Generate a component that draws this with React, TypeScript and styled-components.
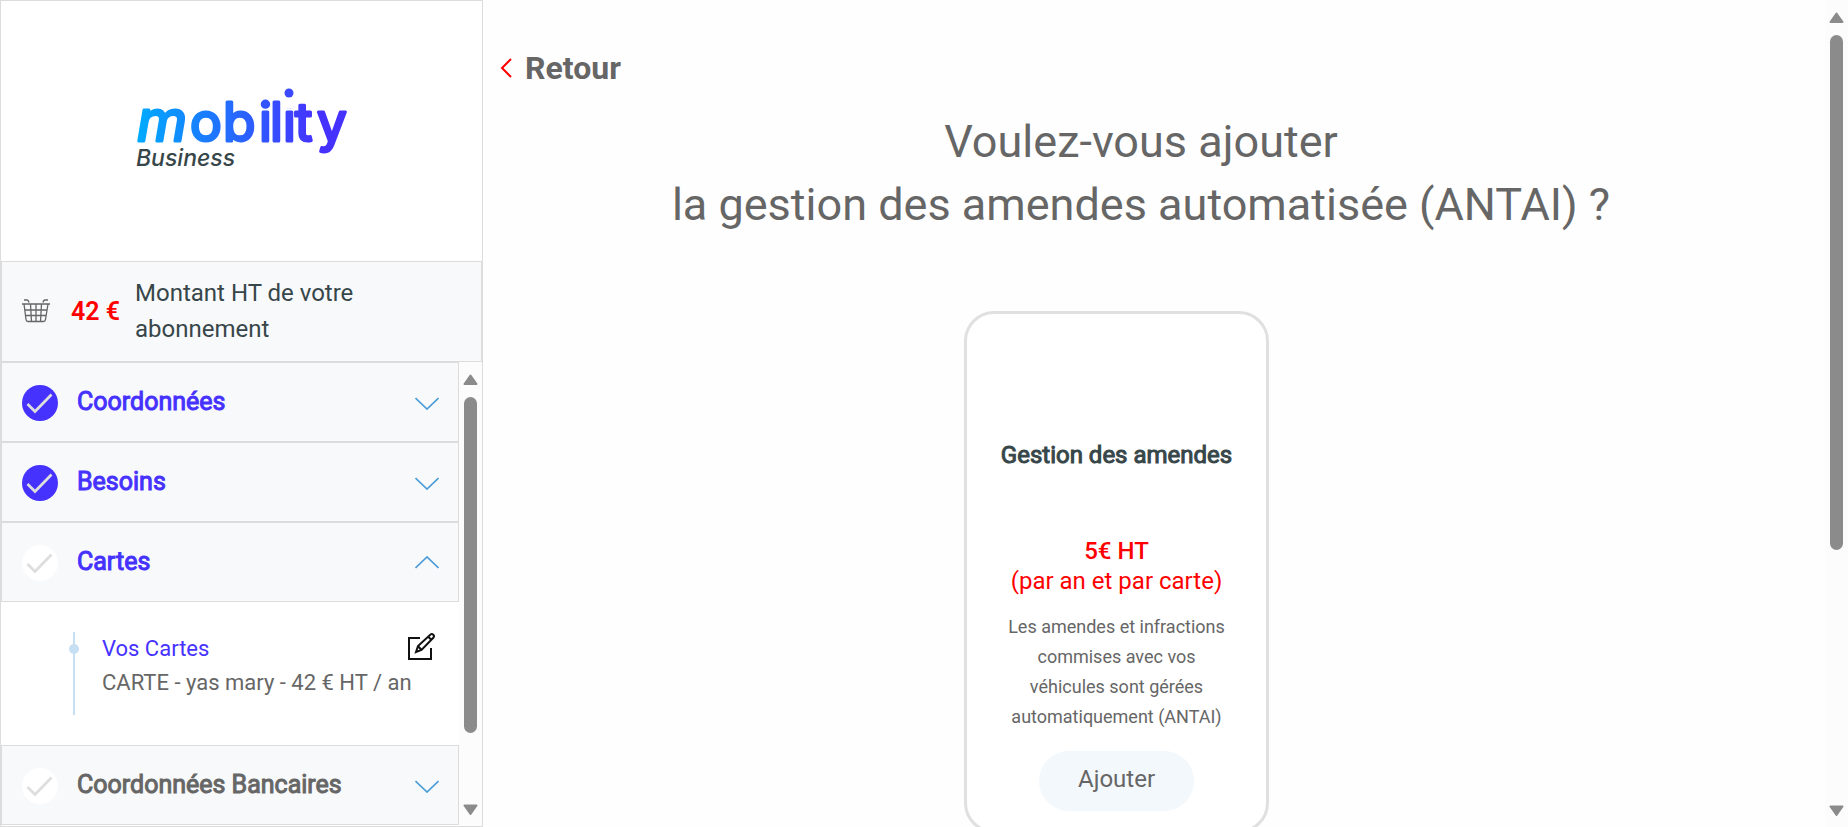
import React from "react";
import styled, { createGlobalStyle } from "styled-components";

const GlobalStyle = createGlobalStyle`
  *, *::before, *::after { box-sizing: border-box; }
  html, body { height: 100%; margin: 0; overflow: hidden; }
  #root { height: 100%; }
  body {
    background: #fefefe;
    color: #666;
    font-family: Roboto, "Liberation Sans", sans-serif;
    font-size: 24px;
  }
  h1, h2, p, ul { margin: 0; padding: 0; }
  button { font: inherit; color: inherit; border: 0; background: none; padding: 0; cursor: pointer; }
`;

const Page = styled.div`
  display: flex;
  height: 100vh;
`;

const Sidebar = styled.aside`
  display: flex;
  flex-direction: column;
  flex: 0 0 483px;
  border: 1px solid #dcdcdc;
  background: #fff;
`;

const Brand = styled.div`
  display: flex;
  align-items: center;
  justify-content: center;
  flex: 0 0 260px;
`;

const Amount = styled.section`
  display: flex;
  align-items: center;
  padding: 13px 19px 14px;
  border: 1px solid #dcdcdc;
  background: #f8f9fb;
`;

const AmountPrice = styled.strong`
  margin: 0 15px 0 20px;
  padding-top: 2px;
  color: #f00;
  font-size: 25px;
  font-weight: 600;
  line-height: 36px;
  white-space: nowrap;
`;

const AmountText = styled.span`
  color: #374649;
  line-height: 36px;
`;

const Steps = styled.div`
  display: flex;
  flex: 1;
  min-height: 0;
`;

const StepList = styled.ul`
  flex: 1;
  min-width: 0;
  overflow: hidden;
  list-style: none;
`;

const StepHeader = styled.button<{ $active?: boolean }>`
  display: flex;
  align-items: center;
  width: 100%;
  height: 80px;
  padding: 2px 19px 0 20px;
  border: 1px solid #dcdcdc;
  background: #f8f9fb;
  color: ${(p) => (p.$active ? "#4632ff" : "#666")};
  text-align: left;
`;

const StepTitle = styled.span`
  flex: 1;
  margin-left: 19px;
  padding-bottom: 3px;
  font-size: 25px;
  -webkit-text-stroke: 1px currentColor;
`;

const StepBody = styled.div`
  display: flex;
  padding: 30px 20px 30px 68px;
`;

const Timeline = styled.div`
  display: flex;
  justify-content: center;
  width: 10px;
  height: 83px;
  background: linear-gradient(#c6dff2, #c6dff2) center / 2px 100% no-repeat;
  &::before {
    content: "";
    width: 10px;
    height: 10px;
    margin-top: 12px;
    border-radius: 50%;
    background: #c6dff2;
  }
`;

const StepDetails = styled.div`
  flex: 1;
  margin-left: 23px;
  font-size: 22px;
  line-height: 34px;
`;

const DetailsHead = styled.div`
  display: flex;
  justify-content: space-between;
`;

const DetailsLink = styled.a`
  color: #4632ff;
  text-decoration: none;
`;

const EditButton = styled.button`
  display: flex;
  width: 32px;
  height: 32px;
`;

const ScrollBar = styled.div`
  display: flex;
  flex-direction: column;
  align-items: center;
  flex: 0 0 23px;
  padding: 12px 0 11px;
  background: #fcfcfc;
`;

const ScrollTrack = styled.div`
  flex: 1;
  width: 13px;
  margin: 12px 0;
`;

const ScrollThumb = styled.div<{ $size: number }>`
  height: ${(p) => p.$size}%;
  border-radius: 7px;
  background: #8b8b8b;
`;

const Main = styled.main`
  flex: 1;
  min-width: 0;
  overflow: hidden;
  padding: 46px 26px 0 16px;
`;

const BackButton = styled.button`
  display: flex;
  align-items: center;
  gap: 12px;
  height: 44px;
  font-size: 32px;
  font-weight: 700;
`;

const Question = styled.h1`
  margin: 20px 0 75px -16px;
  font-size: 45px;
  font-weight: 400;
  line-height: 63px;
  text-align: center;
`;

const Offers = styled.div`
  display: flex;
  justify-content: center;
  margin-left: -16px;
  padding-right: 49px;
`;

const Offer = styled.article`
  display: flex;
  flex-direction: column;
  align-items: center;
  width: 305px;
  padding: 123px 24px 19px;
  border: 3px solid #e0e0e0;
  border-radius: 30px;
  background: #fff;
  text-align: center;
`;

const OfferTitle = styled.h2`
  color: #374649;
  font-size: 24px;
  font-weight: 400;
  line-height: 36px;
  white-space: nowrap;
  -webkit-text-stroke: 1px currentColor;
`;

const OfferPrice = styled.p`
  margin-top: 63px;
  color: #f00;
  line-height: 30px;
`;

const PriceValue = styled.strong`
  display: block;
  font-weight: 500;
`;

const OfferText = styled.p`
  margin: 16px 0 19px;
  padding: 0 12px;
  font-size: 18px;
  line-height: 30px;
`;

const AddButton = styled.button`
  width: 155px;
  height: 60px;
  padding-bottom: 4px;
  border-radius: 30px;
  background: #f3f8fc;
`;

function Logo() {
  return (
    <svg width="216" height="90" viewBox="0 0 216 90" role="img" aria-label="mobility Business">
      <defs>
        <linearGradient id="brand" gradientUnits="userSpaceOnUse" x1="4" y1="0" x2="212" y2="0">
          <stop offset="0" stopColor="#00aaff" />
          <stop offset="0.85" stopColor="#4632ff" />
        </linearGradient>
      </defs>
      <text
        x="3 56 89 125 136 149 161 183"
        y="55"
        fontFamily="Inter, sans-serif"
        fontSize="53"
        fill="url(#brand)"
        stroke="url(#brand)"
        strokeWidth="3"
        strokeLinejoin="round"
      >
        <tspan fontStyle="italic" fontSize="57">m</tspan>obility
      </text>
      <circle cx="155" cy="17" r="6" fill="#fff" />
      <circle cx="155" cy="7" r="4.500" fill="#3d49ff" />
      <text x="2" y="80" fontFamily="Inter, sans-serif" fontSize="23" fontStyle="italic" fontWeight="500" fill="#374649">
        Business
      </text>
    </svg>
  );
}

function BasketIcon() {
  return (
    <svg width="30" height="26" viewBox="0 0 30 26" fill="none" stroke="#666" strokeWidth="1.3" aria-hidden="true">
      <path d="M1 6h28M3 6l2 15.500q.3 2 2 2h15.500q1.700 0 2-2L27 6M4 12h22M4.500 17.500h21M9.500 6l1 17.500M15 6v17.500M20.500 6l-1 17.500M3 2h3q1.500 0 2 2.500M27 2h-3q-1.500 0-2 2.500" />
    </svg>
  );
}

function StatusIcon({ done }: { done?: boolean }) {
  return (
    <svg width="36" height="36" viewBox="0 0 36 36" aria-hidden="true">
      <circle cx="18" cy="18" r="18" fill={done ? "#4632ff" : "#fff"} />
      <path d="M5.500 19l7.500 7.500L29.500 9.500" fill="none" stroke="#dedede" strokeWidth="2.700" />
    </svg>
  );
}

function Chevron({ up }: { up?: boolean }) {
  return (
    <svg width="24" height="14" viewBox="0 0 24 14" fill="none" stroke="#4a9cd8" strokeWidth="1.700" aria-hidden="true">
      <path d={up ? "M.5 12L12 1l11.500 11" : "M.5 2L12 13l11.500-11"} />
    </svg>
  );
}

function EditIcon() {
  return (
    <svg width="32" height="32" viewBox="0 0 32 32" fill="none" stroke="#111" strokeWidth="2" aria-hidden="true">
      <path d="M13 6H2v21h22V16" />
      <path d="M9 20l2-6L23.500 2.500q1.500-1 2.800.2t.2 2.800L14.500 18zM21.500 5l3 3M11 14l3.500 4" />
    </svg>
  );
}

function ScrollArrow({ down }: { down?: boolean }) {
  return (
    <svg width="15" height="11" viewBox="0 0 15 11" fill="#8b8b8b" stroke="#8b8b8b" strokeWidth="2" strokeLinejoin="round" aria-hidden="true">
      <path d={down ? "M1.500 1.500h12L7.500 10z" : "M1.500 10h12L7.500 1.500z"} />
    </svg>
  );
}

function Scroller({ size }: { size: number }) {
  return (
    <ScrollBar aria-hidden="true">
      <ScrollArrow />
      <ScrollTrack>
        <ScrollThumb $size={size} />
      </ScrollTrack>
      <ScrollArrow down />
    </ScrollBar>
  );
}

type StepProps = { title: string; done?: boolean; active?: boolean; open?: boolean; children?: React.ReactNode };

function Step({ title, done, active, open, children }: StepProps) {
  return (
    <li>
      <StepHeader type="button" $active={active} aria-expanded={!!open}>
        <StatusIcon done={done} />
        <StepTitle>{title}</StepTitle>
        <Chevron up={open} />
      </StepHeader>
      {open && children}
    </li>
  );
}

export default function App() {
  return (
    <Page>
      <GlobalStyle />
      <Sidebar>
        <Brand>
          <Logo />
        </Brand>
        <Amount>
          <BasketIcon />
          <AmountPrice>42 €</AmountPrice>
          <AmountText>
            Montant HT de votre
            <br />
            abonnement
          </AmountText>
        </Amount>
        <Steps>
          <StepList>
            <Step title="Coordonnées" done active />
            <Step title="Besoins" done active />
            <Step title="Cartes" active open>
              <StepBody>
                <Timeline />
                <StepDetails>
                  <DetailsHead>
                    <DetailsLink href="#cartes">Vos Cartes</DetailsLink>
                    <EditButton type="button" aria-label="Modifier">
                      <EditIcon />
                    </EditButton>
                  </DetailsHead>
                  <p>CARTE - yas mary - 42 € HT / an</p>
                </StepDetails>
              </StepBody>
            </Step>
            <Step title="Coordonnées Bancaires" />
          </StepList>
          <Scroller size={85} />
        </Steps>
      </Sidebar>
      <Main>
        <BackButton type="button">
          <svg width="14" height="20" viewBox="0 0 14 20" fill="none" stroke="#f00" strokeWidth="2" aria-hidden="true">
            <path d="M12 1L3 10l9 9" />
          </svg>
          Retour
        </BackButton>
        <Question>
          Voulez-vous ajouter
          <br />
          la gestion des amendes automatisée (ANTAI) ?
        </Question>
        <Offers>
          <Offer>
            <OfferTitle>Gestion des amendes</OfferTitle>
            <OfferPrice>
              <PriceValue>5€ HT</PriceValue>
              (par an et par carte)
            </OfferPrice>
            <OfferText>Les amendes et infractions commises avec vos véhicules sont gérées automatiquement (ANTAI)</OfferText>
            <AddButton type="button">Ajouter</AddButton>
          </Offer>
        </Offers>
      </Main>
      <Scroller size={68} />
    </Page>
  );
}
